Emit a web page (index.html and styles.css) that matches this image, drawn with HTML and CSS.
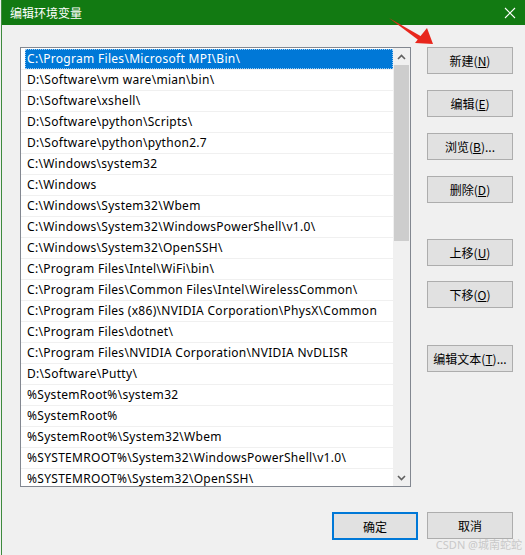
FILE: index.html
```html
<!DOCTYPE html>
<html lang="zh-CN">
<head>
    <meta charset="UTF-8">
    <title>编辑环境变量</title>
    <link rel="stylesheet" href="styles.css">
</head>
<body>

    <div class="window">
        <div class="titlebar">
            <span class="title">编辑环境变量</span>
            <svg class="close" width="12" height="12" viewBox="0 0 12 12">
                <path d="M1 1 L11 11 M11 1 L1 11" stroke="#fff" stroke-width="1.1" fill="none"/>
            </svg>
        </div>

        <div class="content">
            <div class="main">
                <div class="listbox">
                    <ul class="list">
                        <li class="row selected"><span>C:\Program Files\Microsoft MPI\Bin\</span></li>
                        <li class="row"><span>D:\Software\vm ware\mian\bin\</span></li>
                        <li class="row"><span>D:\Software\xshell\</span></li>
                        <li class="row"><span>D:\Software\python\Scripts\</span></li>
                        <li class="row"><span>D:\Software\python\python2.7</span></li>
                        <li class="row"><span>C:\Windows\system32</span></li>
                        <li class="row"><span>C:\Windows</span></li>
                        <li class="row"><span>C:\Windows\System32\Wbem</span></li>
                        <li class="row"><span>C:\Windows\System32\WindowsPowerShell\v1.0\</span></li>
                        <li class="row"><span>C:\Windows\System32\OpenSSH\</span></li>
                        <li class="row"><span>C:\Program Files\Intel\WiFi\bin\</span></li>
                        <li class="row"><span>C:\Program Files\Common Files\Intel\WirelessCommon\</span></li>
                        <li class="row"><span>C:\Program Files (x86)\NVIDIA Corporation\PhysX\Common</span></li>
                        <li class="row"><span>C:\Program Files\dotnet\</span></li>
                        <li class="row"><span>C:\Program Files\NVIDIA Corporation\NVIDIA NvDLISR</span></li>
                        <li class="row"><span>D:\Software\Putty\</span></li>
                        <li class="row"><span>%SystemRoot%\system32</span></li>
                        <li class="row"><span>%SystemRoot%</span></li>
                        <li class="row"><span>%SystemRoot%\System32\Wbem</span></li>
                        <li class="row"><span>%SYSTEMROOT%\System32\WindowsPowerShell\v1.0\</span></li>
                        <li class="row"><span>%SYSTEMROOT%\System32\OpenSSH\</span></li>
                    </ul>

                    <div class="scrollbar">
                        <div class="sb-arrow">
                            <svg width="9" height="6" viewBox="0 0 9 6"><path d="M1 5 L4.5 1.5 L8 5" stroke="#606060" stroke-width="1.6" fill="none"/></svg>
                        </div>
                        <div class="sb-track">
                            <div class="sb-thumb"></div>
                        </div>
                        <div class="sb-arrow">
                            <svg width="9" height="6" viewBox="0 0 9 6"><path d="M1 1 L4.5 4.5 L8 1" stroke="#606060" stroke-width="1.6" fill="none"/></svg>
                        </div>
                    </div>
                </div>

                <div class="side">
                    <div class="group group-top">
                        <button class="btn">新建(<u>N</u>)</button>
                        <button class="btn">编辑(<u>E</u>)</button>
                        <button class="btn">浏览(<u>B</u>)...</button>
                        <button class="btn">删除(<u>D</u>)</button>
                    </div>
                    <div class="group group-move">
                        <button class="btn">上移(<u>U</u>)</button>
                        <button class="btn">下移(<u>O</u>)</button>
                    </div>
                    <div class="group group-text">
                        <button class="btn">编辑文本(<u>T</u>)...</button>
                    </div>
                </div>
            </div>

            <div class="footer">
                <button class="btn btn-default">确定</button>
                <button class="btn">取消</button>
            </div>
        </div>

        <!-- красная стрелка на скриншоте -->
        <svg class="pointer" width="60" height="40" viewBox="0 0 60 40">
            <path d="M1 2 L36 22 L33 26 Z" fill="#e8261c"/>
            <path d="M45 28 L39 12 L27 27 Z" fill="#e8261c"/>
        </svg>

        <div class="watermark">CSDN @城南蛇蛇</div>
    </div>

</body>
</html>
```

FILE: styles.css
```css
/* Основные стили */
body {
    margin: 0;
    padding: 0;
    background-color: #f0f0f0;
    font-family: "Noto Sans", "Noto Sans CJK SC", sans-serif;
    font-size: 12px;
    color: #000;
}

.window {
    position: relative;
    width: 524px;
    height: 555px;
    margin-left: 1px;
    border-left: 1px solid #3d8a3d;
    box-sizing: border-box;
    background-color: #f0f0f0;
    overflow: hidden;
}

.titlebar {
    height: 25px;
    background-color: #127a12;
    display: flex;
    align-items: center;
    justify-content: space-between;
    padding: 0 9px 0 8px;
}

.title {
    color: #fff;
    font-family: "Noto Sans CJK SC", sans-serif;
    font-size: 12px;
}

.content {
    padding: 22px 0 0 18px;
}

.main {
    display: flex;
    align-items: flex-start;
}

/* Список путей */
.listbox {
    width: 391px;
    height: 440px;
    border: 1px solid #828790;
    box-sizing: border-box;
    background-color: #fff;
    display: flex;
}

.list {
    list-style: none;
    margin: 0;
    padding: 1px 0 0 0;
    flex: 1;
    overflow: hidden;
}

.row {
    height: 20px;
    border-bottom: 1px solid #f0f0f0;
    display: flex;
}

/* последняя строка видна не полностью */
.row:last-child {
    height: 17px;
    border-bottom: none;
}

.row span {
    flex: 1;
    margin-left: 4px;
    padding-left: 2px;
    line-height: 20px;
    letter-spacing: 0.3px;
    white-space: nowrap;
}

.row:last-child span {
    line-height: 19px;
}

.row.selected span {
    background-color: #0078d7;
    color: #fff;
    outline: 1px dotted #9ccaf0;
    outline-offset: -1px;
}

.scrollbar {
    width: 17px;
    background-color: #f0f0f0;
    display: flex;
    flex-direction: column;
}

.sb-arrow {
    height: 17px;
    display: flex;
    align-items: center;
    justify-content: center;
}

.sb-track {
    flex: 1;
}

.sb-thumb {
    height: 176px;
    margin: 0 1px;
    background-color: #cdcdcd;
}

/* Кнопки справа */
.side {
    margin-left: 16px;
    width: 86px;
}

.group {
    display: flex;
    flex-direction: column;
    gap: 15px;
}

.group-top {
    gap: 16px;
}

.group-move {
    margin-top: 36px;
}

.group-text {
    margin-top: 37px;
}

.btn {
    width: 86px;
    height: 27px;
    padding: 0;
    background-color: #e1e1e1;
    border: 1px solid #adadad;
    box-sizing: border-box;
    font-family: "Noto Sans CJK SC", sans-serif;
    font-size: 12px;
    color: #000;
}

.btn u {
    text-underline-offset: 1px;
}

.footer {
    width: 493px;
    margin-top: 25px;
    display: flex;
    justify-content: flex-end;
    gap: 9px;
}

.btn-default {
    height: 28px;
    border: 2px solid #0078d7;
}

.pointer {
    position: absolute;
    left: 386px;
    top: 16px;
}

.watermark {
    position: absolute;
    right: 3px;
    bottom: 3px;
    color: #c9c9c9;
    font-size: 11px;
    font-family: "Noto Sans", "Noto Sans CJK SC", sans-serif;
}
```
